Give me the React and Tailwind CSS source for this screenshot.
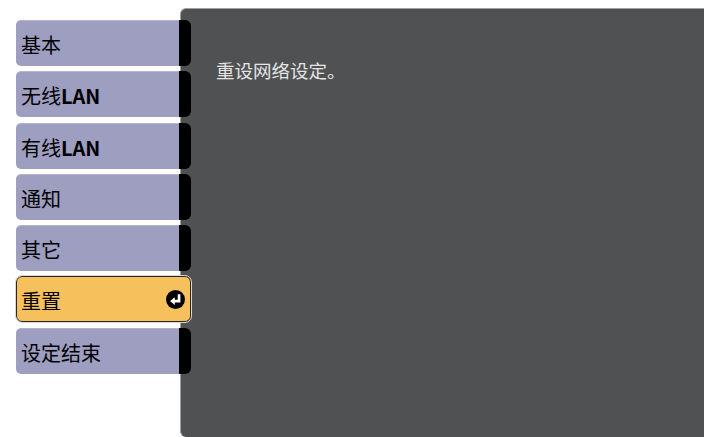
import React from 'react';

const items = [
    { label: '基本' },
    { label: '无线', latin: 'LAN' },
    { label: '有线', latin: 'LAN' },
    { label: '通知' },
    { label: '其它' },
    { label: '重置', active: true },
    { label: '设定结束' },
];

function EnterIcon() {
    return (
        <svg width="19" height="19" viewBox="0 0 16 16" className="shrink-0">
            <circle cx="8" cy="8" r="8" fill="#000" />
            <path d="M11 3.6 V9.3 H6.5" fill="none" stroke="#fff" strokeWidth="2.3" />
            <path d="M3.4 9.3 L7.4 6 L7.4 12.6 Z" fill="#fff" />
        </svg>
    );
}

function Label({ item }) {
    return (
        <span className="text-[20px] leading-none text-black pt-[3px]">
            {item.label}
            {item.latin && <span className="font-bold">{item.latin}</span>}
        </span>
    );
}

export default function App() {
    return (
        <div className="w-[704px] h-[437px] bg-white flex overflow-hidden font-['Noto_Sans_CJK_SC','Noto_Sans',sans-serif]">
            {/* Menu tabs */}
            <div className="relative z-10 shrink-0 w-[191px] pl-4 pt-5 flex flex-col gap-[5.3px]">
                {items.map((item) =>
                    item.active ? (
                        <div key={item.label} className="h-[46px] w-[175px] flex items-center justify-between pl-[4px] pr-[5px] bg-[#f6c15c] border border-[#262626] rounded-[6px] outline outline-1 outline-[#d8d8d8]">
                            <Label item={item} />
                            <EnterIcon />
                        </div>
                    ) : (
                        <div key={item.label} className="h-[46px] flex">
                            <div className="w-[163px] flex items-center pl-[5px] bg-[#9e9ec0] rounded-l-[5px] border-t border-[#b4b4d0]">
                                <Label item={item} />
                            </div>
                            <div className="w-[12px] bg-black rounded-r-[6px]" />
                        </div>
                    )
                )}
            </div>

            {/* Content panel */}
            <div className="ml-[-11px] mt-2 flex-1 bg-[#505153] rounded-l-[6px] border-t border-l border-[#a0a0a0] pl-[35px] pt-[48px]">
                <p className="text-[18.5px] leading-[26px] text-[#e4e4e4]">重设网络设定。</p>
            </div>
        </div>
    );
}
